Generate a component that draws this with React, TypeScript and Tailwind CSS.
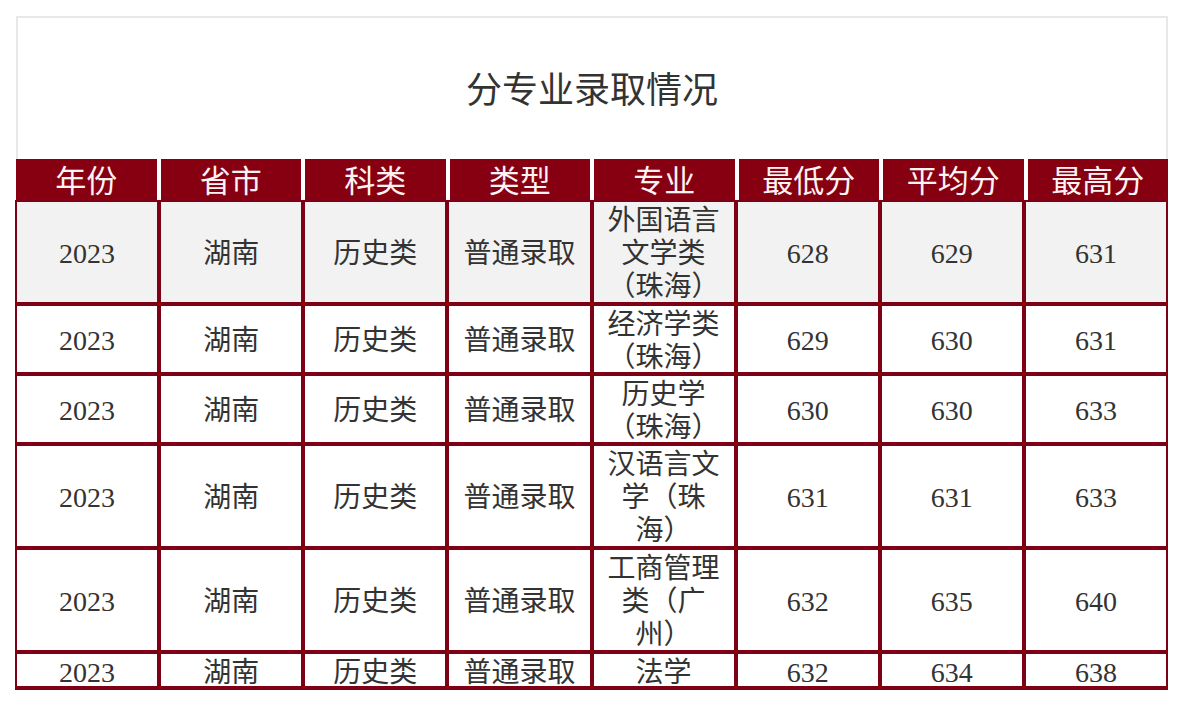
const headers = ["年份", "省市", "科类", "类型", "专业", "最低分", "平均分", "最高分"];

const rows = [
  { major: "外国语言文学类（珠海）", low: "628", avg: "629", high: "631", h: "h-[104px]", bg: "bg-[#f2f2f2]" },
  { major: "经济学类（珠海）", low: "629", avg: "630", high: "631", h: "h-[70px]", bg: "bg-white" },
  { major: "历史学（珠海）", low: "630", avg: "630", high: "633", h: "h-[70px]", bg: "bg-white" },
  { major: "汉语言文学（珠海）", low: "631", avg: "631", high: "633", h: "h-[104px]", bg: "bg-white" },
  { major: "工商管理类（广州）", low: "632", avg: "635", high: "640", h: "h-[104px]", bg: "bg-white" },
  { major: "法学", low: "632", avg: "634", high: "638", h: "h-[38px]", bg: "bg-white" },
];

const font = "font-['Liberation_Serif','Noto_Sans_CJK_SC',serif]";

export default function App() {
  return (
    <div className={`min-h-[706px] bg-white pt-4 pl-4 ${font}`}>
      <div className="w-[1152px]">
        <div className="flex h-[143px] items-center justify-center border-2 border-b-0 border-[#e8e8e8] pt-[4px] text-[36px] text-[#333]">
          分专业录取情况
        </div>
        <div className="grid h-[41px] grid-cols-8 gap-x-[4px] bg-white">
          {headers.map((h) => (
            <div key={h} className="flex items-center justify-center bg-[#870012] pt-[4px] text-[31px] leading-none text-[#fdf3f3]">
              {h}
            </div>
          ))}
        </div>
        <div className="-ml-[1px] overflow-hidden">
          {rows.map((r, i) => {
            const cells = ["2023", "湖南", "历史类", "普通录取", r.major, r.low, r.avg, r.high];
            const last = i === rows.length - 1;
            return (
              <div key={i} className={`grid grid-cols-8 ${r.h} ${r.bg}`}>
                {cells.map((c, j) => (
                  <div
                    key={j}
                    className={`flex justify-center overflow-hidden border-2 border-[#7d0014] px-[10px] text-center text-[28px] leading-[33px] text-[#333] ${
                      last ? "items-start pt-[2px] border-b-[4px]" : "items-center pt-[3px]"
                    }`}
                  >
                    <span className="block w-full">{c}</span>
                  </div>
                ))}
              </div>
            );
          })}
        </div>
      </div>
    </div>
  );
}
